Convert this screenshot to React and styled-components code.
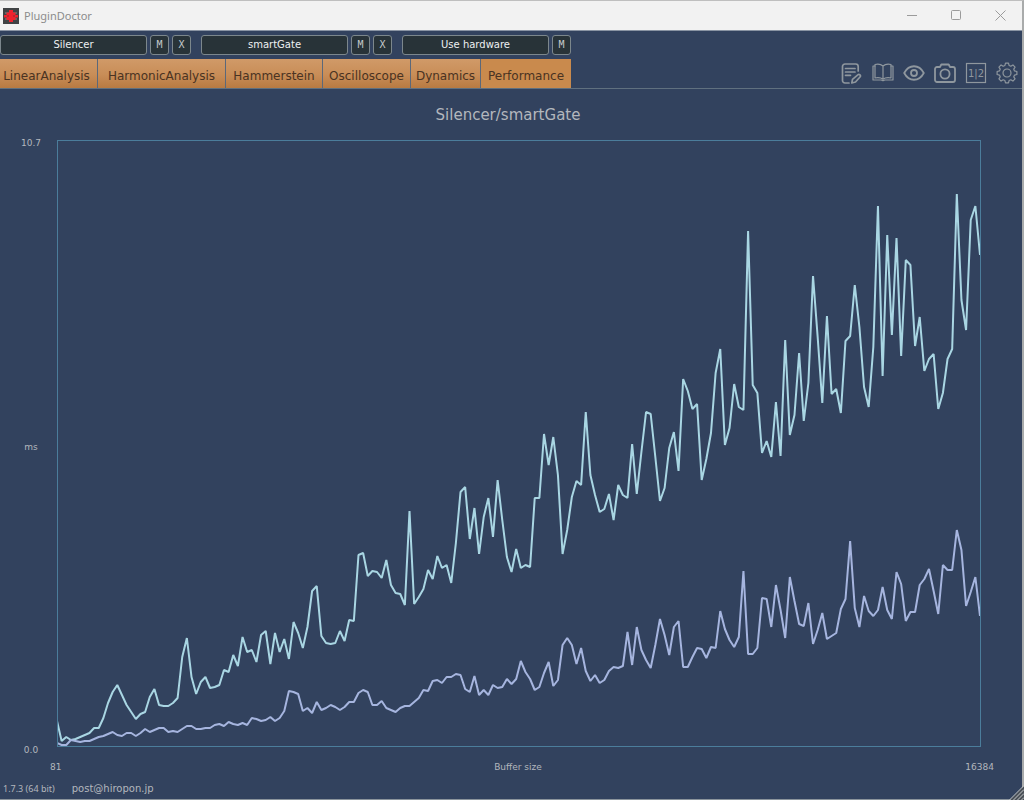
import React from "react";
import styled, { createGlobalStyle, css } from "styled-components";

const GlobalStyle = createGlobalStyle`
  * { box-sizing: border-box; }
  body { margin: 0; background: #a9abab; }
  button { font: inherit; margin: 0; padding: 0; cursor: pointer; }
`;

const Window = styled.div`
  display: flex;
  flex-direction: column;
  height: 100vh;
  min-height: 480px;
  position: relative;
  background: #32425e;
  border-top: 1px solid #bfbfbf;
  border-right: 2px solid #a9abab;
  border-bottom: 1px solid #8b949c;
  font-family: "DejaVu Sans", Verdana, sans-serif;
  color: #b3b7bd;
`;

const TitleBar = styled.header`
  display: flex;
  align-items: center;
  height: 30px;
  padding-left: 3px;
  background: #f2f2f2;
  border-bottom: 1px solid #8a94a3;
`;

const AppName = styled.h1`
  flex: 1;
  margin: 0 0 0 5px;
  font: 400 11px/16px "Noto Sans", "Open Sans", sans-serif;
  color: #8c8c8c;
`;

const WindowButton = styled.button`
  display: flex;
  align-items: center;
  justify-content: center;
  width: 44px;
  height: 28px;
  border: 0;
  background: none;
  color: #9b9b9b;
`;

const SlotBar = styled.div`
  display: flex;
  gap: 10px;
  padding: 4px 0;
`;

const Slot = styled.div`
  display: flex;
  gap: 3px;
`;

const slotFace = css`
  height: 20px;
  border: 1px solid #7c878c;
  border-radius: 3px;
  background: #283338;
  line-height: 18px;
  text-align: center;
`;

const SlotName = styled.button`
  ${slotFace}
  width: 147px;
  font-size: 10px;
  color: #eef0f1;
`;

const SlotKey = styled.button`
  ${slotFace}
  width: 19px;
  font-family: "DejaVu Sans Mono", monospace;
  font-size: 10px;
  color: #c3c8ca;
`;

const TabBar = styled.nav`
  display: flex;
  align-items: flex-end;
  height: 30px;
  border-bottom: 1px solid #60707f;
`;

const Tab = styled.button`
  width: ${(p) => p.$width}px;
  height: 29px;
  padding: 4px ${(p) => (p.$first ? 4 : 0)}px 0 0;
  border: 0;
  border-right: ${(p) => (p.$active ? 0 : 1)}px solid #5b687a;
  background: ${(p) =>
    p.$active ? "#c98a4d" : "linear-gradient(#d09a68, #c88d57 55%, #b87a42)"};
  font-size: 12px;
  line-height: 24px;
  color: #4a3322;
  white-space: nowrap;
`;

const Tools = styled.div`
  display: flex;
  gap: 9px;
  margin-left: auto;
  padding: 0 4px 4px 0;
`;

const ToolButton = styled.button`
  width: 22px;
  height: 22px;
  border: 0;
  background: none;
  color: #8f979e;

  svg { display: block; }
`;

const Content = styled.main`
  flex: 1;
  display: flex;
  flex-direction: column;
  min-height: 0;
`;

const Heading = styled.h2`
  margin: 0;
  padding: 2px 6px 0 0;
  font-size: 15px;
  font-weight: 400;
  line-height: 49px;
  text-align: center;
`;

const Chart = styled.section`
  flex: 1;
  display: flex;
  min-height: 0;
  padding-right: 41px;
`;

const YAxis = styled.div`
  display: flex;
  flex-direction: column;
  justify-content: space-between;
  width: 57px;
  margin: -3px 0 -9px;
  padding-left: 5px;
  font-size: 9px;
  line-height: 12px;
  text-align: center;
`;

const Plot = styled.div`
  flex: 1;
  min-width: 0;
  min-height: 0;
  display: grid;
  grid-template-rows: minmax(0, 1fr);
  padding-right: 1px;
  outline: 1px solid #4b7d9b;
  outline-offset: -1px;

  svg { width: 100%; height: 100%; display: block; }
`;

const Trace = styled.polyline`
  fill: none;
  stroke: ${(p) => p.$color};
  stroke-width: 2px;
  stroke-linejoin: bevel;
  vector-effect: non-scaling-stroke;
`;

const XAxis = styled.div`
  display: grid;
  grid-template-columns: 1fr auto 1fr;
  padding: 13px 28px 0 42px;
  font-size: 9px;
  line-height: 14px;
`;

const XLabel = styled.span`
  text-align: ${(p) => p.$align || "center"};
  padding-left: ${(p) => (p.$align === "left" ? 8 : 0)}px;
`;

const Footer = styled.footer`
  display: flex;
  gap: 17px;
  padding: 8px 3px 3px;
  line-height: 14px;
`;

const Version = styled.span`
  font-family: "Noto Sans", "Open Sans", sans-serif;
  font-size: 9px;
`;

const Contact = styled.a`
  font-size: 10px;
  color: inherit;
  text-decoration: none;
`;

const Grip = styled.svg`
  position: absolute;
  right: -2px;
  bottom: -1px;
`;

/* Sample depth below the chart's top edge, one entry for each buffer size. */
const silencer = [
  581, 601, 597, 600, 599, 597, 595, 593, 588, 588, 578, 563, 552, 545, 555, 565, 572, 579, 574, 572,
  557, 549, 565, 566, 566, 563, 558, 517, 498, 537, 554, 542, 537, 548, 547, 545, 530, 532, 515, 526,
  497, 512, 510, 522, 495, 491, 524, 493, 512, 499, 519, 482, 493, 508, 487, 451, 446, 496, 503, 504,
  503, 491, 501, 480, 481, 415, 413, 436, 431, 432, 438, 420, 445, 453, 454, 465, 371, 464, 457, 449,
  430, 439, 416, 428, 425, 443, 403, 352, 347, 399, 368, 414, 377, 358, 397, 340, 380, 417, 432, 409,
  428, 425, 427, 358, 358, 294, 325, 297, 335, 414, 390, 357, 341, 345, 272, 335, 355, 372, 369, 354,
  380, 345, 355, 358, 304, 354, 312, 272, 274, 317, 361, 348, 308, 292, 331, 239, 251, 269, 264, 340,
  319, 293, 233, 209, 305, 288, 244, 267, 270, 91, 245, 253, 313, 301, 317, 262, 316, 200, 295, 275,
  213, 281, 243, 136, 197, 263, 176, 254, 249, 273, 201, 196, 145, 187, 247, 267, 207, 66, 236, 95,
  195, 98, 216, 120, 125, 206, 177, 231, 219, 214, 269, 253, 219, 209, 54, 160, 190, 80, 66, 115,
];

const smartGate = [
  603, 605, 605, 600, 601, 602, 601, 601, 599, 597, 596, 594, 592, 595, 596, 593, 593, 596, 593, 589,
  592, 590, 588, 588, 592, 591, 592, 589, 586, 586, 589, 589, 588, 588, 585, 584, 586, 582, 584, 585,
  583, 585, 578, 579, 581, 580, 577, 581, 578, 571, 551, 552, 554, 571, 568, 573, 562, 570, 568, 565,
  567, 570, 567, 562, 562, 553, 550, 552, 565, 565, 561, 568, 570, 572, 568, 566, 566, 562, 558, 550,
  551, 541, 540, 543, 537, 537, 534, 535, 549, 552, 536, 555, 550, 555, 545, 548, 547, 539, 544, 539,
  521, 532, 539, 550, 547, 533, 522, 546, 540, 505, 498, 505, 524, 508, 531, 541, 535, 543, 540, 531,
  527, 528, 526, 492, 525, 487, 510, 520, 528, 505, 479, 495, 515, 487, 481, 527, 527, 517, 508, 509,
  518, 507, 508, 471, 489, 500, 507, 497, 431, 514, 514, 508, 458, 459, 487, 445, 470, 498, 437, 461,
  484, 486, 463, 504, 490, 473, 499, 496, 493, 469, 459, 401, 468, 487, 456, 471, 476, 470, 447, 470,
  479, 432, 444, 481, 472, 472, 445, 439, 429, 451, 474, 425, 430, 430, 390, 410, 466, 452, 437, 476,
];

const toPoints = (samples) => samples.map((y, i) => `${i},${y}`).join(" ");

const tabs = [
  ["LinearAnalysis", 98],
  ["HarmonicAnalysis", 128],
  ["Hammerstein", 97],
  ["Oscilloscope", 88],
  ["Dynamics", 70],
  ["Performance", 90],
];

const slots = [
  { name: "Silencer", keys: ["M", "X"] },
  { name: "smartGate", keys: ["M", "X"] },
  { name: "Use hardware", keys: ["M"] },
];

function gearPath() {
  const pts = [];
  const teeth = 8;
  for (let i = 0; i < teeth; i++) {
    const a = (i / teeth) * Math.PI * 2 - Math.PI / 2;
    [[-0.27, 7.8], [-0.15, 10], [0.15, 10], [0.27, 7.8]].forEach(([d, r]) => {
      pts.push(`${(11 + r * Math.cos(a + d)).toFixed(2)} ${(11 + r * Math.sin(a + d)).toFixed(2)}`);
    });
  }
  return `M${pts.join("L")}Z`;
}

function ToolIcon({ children, width = 1.5 }) {
  return (
    <svg width="22" height="22" viewBox="0 0 22 22" fill="none" stroke="currentColor"
      strokeWidth={width} strokeLinecap="round" strokeLinejoin="round" aria-hidden="true">
      {children}
    </svg>
  );
}

const tools = [
  ["Notes", (
    <ToolIcon width={1.7}>
      <path d="M17.2 9V4.5a2.5 2.5 0 0 0-2.5-2.5H4A2.5 2.5 0 0 0 1.5 4.5v14A2.5 2.5 0 0 0 4 21h4" />
      <path d="M4.5 6.5h9.5M4.5 10h9.5M4.5 13.3h5" />
      <path d="M10.8 21l.7-3.7 5.3-4.5c1.5-1.2 3.5.7 2.2 2.2L14.5 20z" />
    </ToolIcon>
  )],
  ["Manual", (
    <ToolIcon width={1.2}>
      <path d="M11 4C9 2.2 6 1.9 3 2.5V16c3-.6 6-.3 8 1.3 2-1.6 5-1.9 8-1.3V2.5C16 1.9 13 2.2 11 4zM11 4v13" />
      <path d="M3 4H1v14h8.5c.5.8 2.5.8 3 0H21V4h-2" />
    </ToolIcon>
  )],
  ["View", (
    <ToolIcon width={1.8}>
      <path d="M1.2 11C6 2 16 2 20.8 11 16 20 6 20 1.2 11z" />
      <circle cx="11" cy="11" r="3" />
    </ToolIcon>
  )],
  ["Snapshot", (
    <ToolIcon width={1.8}>
      <path d="M3 5h3l1.3-2.5h7.4L16 5h3a2 2 0 0 1 2 2v11a2 2 0 0 1-2 2H3a2 2 0 0 1-2-2V7a2 2 0 0 1 2-2z" />
      <circle cx="11" cy="12" r="4.6" />
    </ToolIcon>
  )],
  ["Compare channels", (
    <ToolIcon width={1.2}>
      <rect x="1.5" y="1.5" width="19" height="19" strokeLinejoin="miter" />
      <text x="11" y="15" textAnchor="middle" fontSize="10" fill="currentColor" stroke="none">1|2</text>
    </ToolIcon>
  )],
  ["Settings", (
    <ToolIcon width={1.2}>
      <path d={gearPath()} />
      <circle cx="11" cy="11" r="4" />
    </ToolIcon>
  )],
];

export default function App() {
  return (
    <>
      <GlobalStyle />
      <Window>
        <TitleBar>
          <svg width="16" height="16" viewBox="0 0 16 16" aria-hidden="true">
            <rect width="16" height="16" fill="#414345" />
            <path d="M2 5h12M2 11h12" stroke="#858788" />
            <path d="M6 2h4v2.5h2.5V7H15v2.5h-2.5V12H10v2H6v-2H3.5V9.5H1V7h2.5V4.5H6z" fill="#f0222d" />
            <path d="M5 7v2M11 7v2" stroke="#852d32" />
          </svg>
          <AppName>PluginDoctor</AppName>
          <WindowButton aria-label="Minimize">
            <svg width="11" height="11" stroke="currentColor"><path d="M0 5.5h10" /></svg>
          </WindowButton>
          <WindowButton aria-label="Maximize">
            <svg width="11" height="11" fill="none" stroke="currentColor"><rect x="0.5" y="0.5" width="9" height="9" rx="1" /></svg>
          </WindowButton>
          <WindowButton aria-label="Close">
            <svg width="11" height="11" stroke="currentColor"><path d="M0.5 0.5l10 10M10.5 0.5l-10 10" /></svg>
          </WindowButton>
        </TitleBar>

        <SlotBar>
          {slots.map((slot) => (
            <Slot key={slot.name}>
              <SlotName>{slot.name}</SlotName>
              {slot.keys.map((k) => <SlotKey key={k}>{k}</SlotKey>)}
            </Slot>
          ))}
        </SlotBar>

        <TabBar>
          {tabs.map(([name, width], i) => (
            <Tab key={name} $width={width} $first={i === 0} $active={name === "Performance"}>{name}</Tab>
          ))}
          <Tools>
            {tools.map(([label, icon]) => <ToolButton key={label} aria-label={label}>{icon}</ToolButton>)}
          </Tools>
        </TabBar>

        <Content>
          <Heading>Silencer/smartGate</Heading>
          <Chart>
            <YAxis>
              <span>10.7</span>
              <span>ms</span>
              <span>0.0</span>
            </YAxis>
            <Plot>
              <svg viewBox="0 0 199 607" preserveAspectRatio="none" role="img" aria-label="Processing time by buffer size">
                <Trace $color="#a9d6e3" points={toPoints(silencer)} />
                <Trace $color="#a6b5df" points={toPoints(smartGate)} />
              </svg>
            </Plot>
          </Chart>
          <XAxis>
            <XLabel $align="left">81</XLabel>
            <XLabel>Buffer size</XLabel>
            <XLabel $align="right">16384</XLabel>
          </XAxis>
        </Content>

        <Footer>
          <Version>1.7.3 (64 bit)</Version>
          <Contact href="mailto:post@hiropon.jp">post@hiropon.jp</Contact>
        </Footer>

        <Grip width="15" height="15" viewBox="0 0 15 15" aria-hidden="true">
          <path d="M1 15L15 1V15z" fill="#4b5158" />
          <path d="M0.5 15L15 0.5M4.5 15L15 4.5M8.5 15L15 8.5M12.5 15L15 12.5" stroke="#c5c8c8" />
        </Grip>
      </Window>
    </>
  );
}
